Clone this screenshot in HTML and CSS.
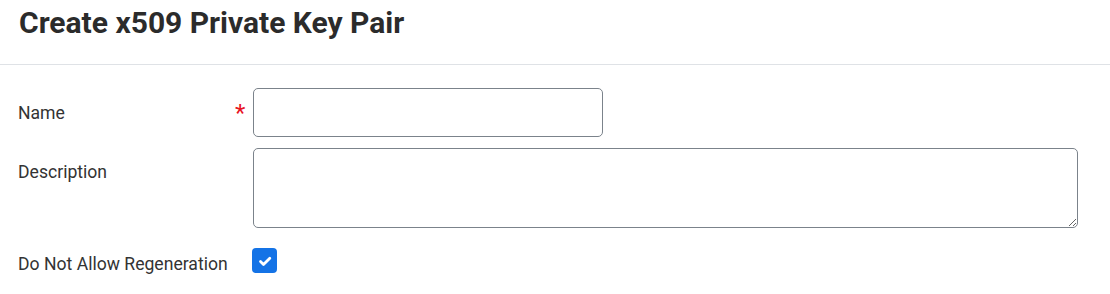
FILE: index.html
```html
<!DOCTYPE html>
<html>
<head>
<meta charset="utf-8">
<link rel="stylesheet" href="styles.css">
</head>
<body>
<div class="page">
  <header class="header">
    <h1 class="title">Create x509 Private Key Pair</h1>
  </header>
  <form class="form">
    <div class="row row-name">
      <label class="label" for="name">Name</label>
      <span class="req">*</span>
      <input class="input" id="name" type="text">
    </div>
    <div class="row row-desc">
      <label class="label" for="desc">Description</label>
      <textarea class="textarea" id="desc"></textarea>
    </div>
    <div class="row row-check">
      <label class="label" for="regen">Do Not Allow Regeneration</label>
      <span class="checkbox" id="regen">
        <svg viewBox="0 0 24 24" width="24" height="24"><path d="M7.5 12.6l3 3L16.8 9.2" fill="none" stroke="#fff" stroke-width="2.8" stroke-linecap="round" stroke-linejoin="round"/></svg>
      </span>
    </div>
  </form>
</div>
</body>
</html>
```
FILE: styles.css
```css
* { box-sizing: border-box; }
html, body { margin: 0; padding: 0; background: #fff; }
body { font-family: Roboto, "Liberation Sans", Arial, sans-serif; color: #333; }
.page { width: 1110px; }
.header {
  height: 65px;
  border-bottom: 1px solid #dfe2e6;
  padding: 0 19px;
  display: flex;
  align-items: flex-start;
}
.title {
  margin: 5px 0 0 0;
  font-size: 30px;
  line-height: 36px;
  font-weight: 700;
  color: #2b2b2b;
}
.form {
  padding: 23px 0 0 18px;
  display: flex;
  flex-direction: column;
}
.row { display: flex; align-items: flex-start; position: relative; }
.label {
  width: 235px;
  font-size: 17.6px;
  line-height: 24px;
  color: #333;
  padding-top: 13px;
}
.row-desc .label { padding-top: 12px; }
.req {
  position: absolute;
  left: 217px;
  top: 13px;
  color: #e8141f;
  font-size: 24px;
  line-height: 24px;
}
.input {
  width: 350px;
  height: 49px;
  border: 1px solid #7b838b;
  border-radius: 5px;
  margin: 0;
  font: inherit;
  padding: 0 10px;
}
.row-desc { margin-top: 11px; }
.textarea {
  width: 825px;
  height: 80px;
  border: 1px solid #7b838b;
  border-radius: 5px;
  margin: 0;
  font: inherit;
  padding: 8px 10px;
  resize: vertical;
}
.row-check { margin-top: 20px; }
.row-check .label { padding-top: 4px; width: 234px; }
.checkbox {
  width: 25px;
  height: 25px;
  border-radius: 4px;
  background: #1473e6;
  display: flex;
  align-items: center;
  justify-content: center;
}
```
